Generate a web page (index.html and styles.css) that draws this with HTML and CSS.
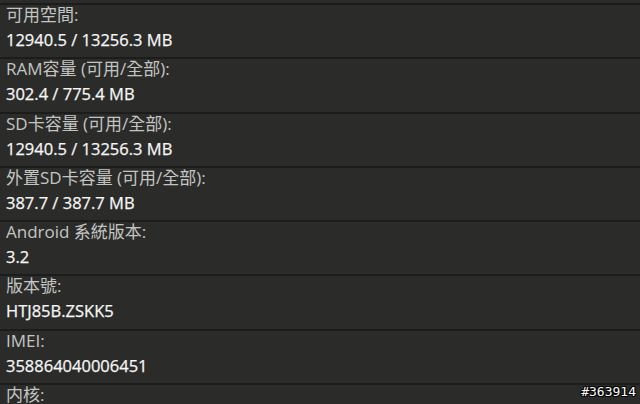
FILE: index.html
```html
<!DOCTYPE html>
<html lang="zh-Hant">
<head>
<meta charset="utf-8">
<link rel="stylesheet" href="styles.css">
</head>
<body>
<div class="screen">
  <div class="list">
    <div class="row"><div class="label">可用空間:</div><div class="value">12940.5 / 13256.3 MB</div></div>
    <div class="row"><div class="label">RAM容量 (可用/全部):</div><div class="value">302.4 / 775.4 MB</div></div>
    <div class="row"><div class="label">SD卡容量 (可用/全部):</div><div class="value">12940.5 / 13256.3 MB</div></div>
    <div class="row"><div class="label">外置SD卡容量 (可用/全部):</div><div class="value">387.7 / 387.7 MB</div></div>
    <div class="row"><div class="label">Android 系統版本:</div><div class="value">3.2</div></div>
    <div class="row"><div class="label">版本號:</div><div class="value">HTJ85B.ZSKK5</div></div>
    <div class="row"><div class="label">IMEI:</div><div class="value">358864040006451</div></div>
    <div class="row"><div class="label">内核:</div><div class="value">2.6.36.3</div></div>
  </div>
  <div class="watermark">#363914</div>
</div>
</body>
</html>
```
FILE: styles.css
```css
html, body {
  margin: 0;
  padding: 0;
  background: #2b2c2a;
}
.screen {
  position: relative;
  width: 640px;
  height: 404px;
  overflow: hidden;
  background: #2b2c2a;
  font-family: "Open Sans", "Noto Sans CJK TC", sans-serif;
}
.list {
  padding-top: 3px;
}
.row {
  border-top: 2px solid #1b1c1b;
  height: 52.3px;
  padding: 0 6px;
  box-sizing: content-box;
}
.label {
  font-size: 17px;
  line-height: 20px;
  color: #c4c5c3;
}
.value {
  margin-top: 3px;
  font-size: 16.5px;
  line-height: 24px;
  font-weight: 500;
  color: #f6f6f6;
  -webkit-text-stroke: 0.25px #f6f6f6;
}
.watermark {
  position: absolute;
  right: 4px;
  bottom: 5px;
  font-family: "DejaVu Sans Mono", monospace;
  font-size: 13px;
  line-height: 15px;
  color: #ffffff;
  text-shadow: 1px 1px 0 #000, -1px -1px 0 #000, 1px -1px 0 #000, -1px 1px 0 #000;
}
```
